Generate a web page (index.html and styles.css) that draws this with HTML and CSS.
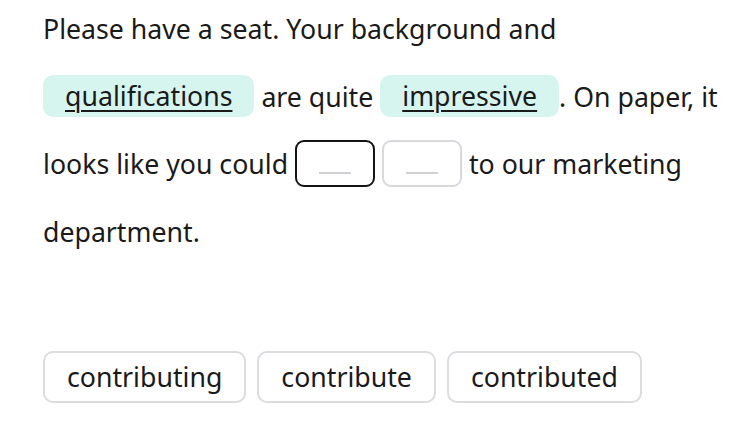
FILE: index.html
```html
<!DOCTYPE html>
<html lang="en">
<head>
<meta charset="utf-8">
<title>Fill in the blank</title>
<link rel="stylesheet" href="styles.css">
</head>
<body>
<main class="exercise">
  <p class="sentence">Please have a seat. Your background and <span class="chip"><span class="chip-word">qualifications</span></span> are quite <span class="chip"><span class="chip-word">impressive</span></span>. On paper, it looks like you could <span class="blank blank-active"><span class="dash"></span></span> <span class="blank"><span class="dash"></span></span> to our marketing department.</p>
  <div class="options">
    <button class="option" type="button">contributing</button>
    <button class="option" type="button">contribute</button>
    <button class="option" type="button">contributed</button>
  </div>
</main>
</body>
</html>
```
FILE: styles.css
```css
html, body {
  margin: 0;
  padding: 0;
  background: #ffffff;
}

body {
  font-family: "Noto Sans", "Open Sans", sans-serif;
  color: #1a1a1a;
}

.exercise {
  padding: 0 12px 0 43px;
}

.sentence {
  margin: 0;
  font-size: 26.7px;
  line-height: 67.5px;
  margin-top: -5px;
}

.chip {
  display: inline-block;
  background: #d7f5ef;
  border-radius: 10px;
  padding: 0 22px;
  line-height: 42px;
  vertical-align: middle;
  position: relative;
  top: -3px;
}

.chip-word {
  text-decoration: underline;
  text-decoration-thickness: 2px;
  text-underline-offset: 4px;
}

.blank {
  display: inline-flex;
  align-items: flex-end;
  justify-content: center;
  box-sizing: border-box;
  width: 80px;
  height: 47px;
  border: 2px solid #d8d8de;
  border-radius: 9px;
  vertical-align: middle;
  padding-bottom: 11px;
  position: relative;
  top: -3px;
}

.blank-active {
  border-color: #141414;
}

.dash {
  display: block;
  width: 32px;
  height: 2px;
  background: #cfcfd4;
}

.options {
  display: flex;
  gap: 11px;
  margin-top: 86px;
}

.option {
  font-family: "Noto Sans", "Open Sans", sans-serif;
  font-size: 26.7px;
  color: #1a1a1a;
  background: #ffffff;
  border: 2px solid #dcdce0;
  border-radius: 10px;
  height: 52px;
  padding: 0 22px;
  line-height: 1;
}
```
